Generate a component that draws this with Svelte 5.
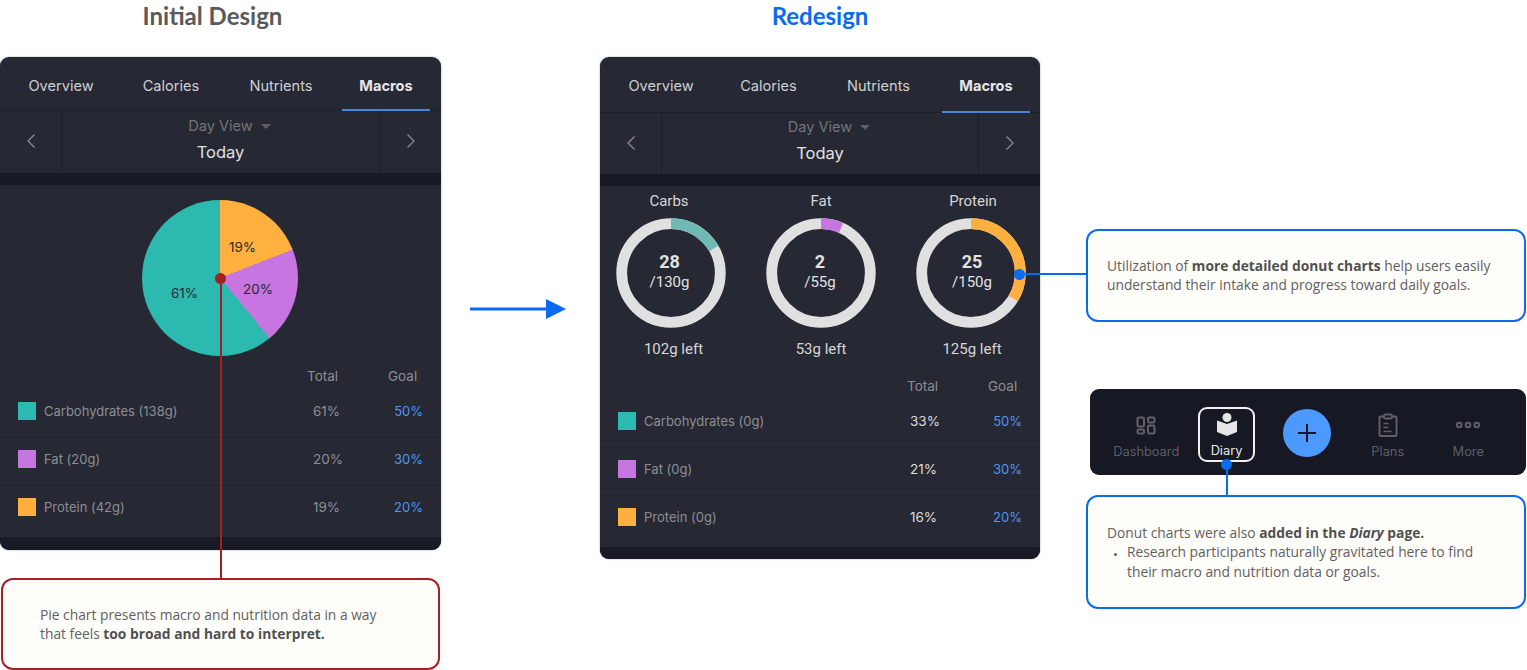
<script lang="ts">
  const tabs = ['Overview', 'Calories', 'Nutrients', 'Macros'];

  const oldRows = [
    { name: 'Carbohydrates (138g)', color: '#2cbab0', total: '61%', goal: '50%' },
    { name: 'Fat (20g)', color: '#c775e0', total: '20%', goal: '30%' },
    { name: 'Protein (42g)', color: '#ffb03f', total: '19%', goal: '20%' }
  ];
  const newRows = [
    { name: 'Carbohydrates (0g)', color: '#2cbab0', total: '33%', goal: '50%' },
    { name: 'Fat (0g)', color: '#c775e0', total: '21%', goal: '30%' },
    { name: 'Protein (0g)', color: '#ffb03f', total: '16%', goal: '20%' }
  ];

  // deg = how far the coloured arc runs round the ring
  const donuts = [
    { label: 'Carbs', value: '28', goal: '/130g', left: '102g left', color: '#6fb9b5', deg: 60 },
    { label: 'Fat', value: '2', goal: '/55g', left: '53g left', color: '#c775e0', deg: 24 },
    { label: 'Protein', value: '25', goal: '/150g', left: '125g left', color: '#ffb03f', deg: 121 }
  ];

  const R = 49.3;
  const C = 2 * Math.PI * R;
</script>

{#snippet header(variant)}
  <div class="tabs {variant}">
    {#each tabs as tab, i}
      <div class="tab" class:active={i === 3}>{tab}</div>
    {/each}
  </div>
  <div class="date {variant}">
    <div class="nav-cell">
      <svg width="10" height="16" viewBox="0 0 10 16"><path d="M8.5 1.5 2 8l6.5 6.5" fill="none" stroke="#8d8e95" stroke-width="1.2" /></svg>
    </div>
    <div class="date-mid">
      <div class="view">Day View <span class="caret"></span></div>
      <div class="today">Today</div>
    </div>
    <div class="nav-cell">
      <svg width="10" height="16" viewBox="0 0 10 16"><path d="M1.500 1.500 8 8l-6.500 6.500" fill="none" stroke="#8d8e95" stroke-width="1.2" /></svg>
    </div>
  </div>
  <div class="band"></div>
{/snippet}

{#snippet table(rows, variant)}
  <div class="table {variant}">
    <div class="thead"><span class="th-total">Total</span><span class="th-goal">Goal</span></div>
    {#each rows as row}
      <div class="row">
        <span class="swatch" style="background: {row.color}"></span>
        <span class="name">{row.name}</span>
        <span class="total">{row.total}</span>
        <span class="goal">{row.goal}</span>
      </div>
    {/each}
  </div>
  <div class="foot {variant}"></div>
{/snippet}

<div class="slide">
  <section class="col col-old">
    <h2 class="title old-title">Initial Design</h2>
    <div class="panel">
      {@render header('old')}
      <div class="pie-wrap">
        <div class="pie">
          <span class="pct p19">19%</span>
          <span class="pct p20">20%</span>
          <span class="pct p61">61%</span>
        </div>
      </div>
      {@render table(oldRows, 'old')}
    </div>
    <div class="note red">
      <p>Pie chart presents macro and nutrition data in a way<br />that feels <b>too broad and hard to interpret.</b></p>
    </div>
  </section>

  <div class="arrow">
    <svg width="96" height="24" viewBox="0 0 96 24">
      <path d="M0 12h78" stroke="#0b6bef" stroke-width="3" />
      <path d="M76 2l20 10-20 10z" fill="#0b6bef" />
    </svg>
  </div>

  <section class="col col-new">
    <h2 class="title new-title">Redesign</h2>
    <div class="panel">
      {@render header('new')}
      <div class="donuts">
        {#each donuts as d}
          <div class="donut">
            <div class="d-label">{d.label}</div>
            <div class="ring">
              <svg width="110" height="110" viewBox="0 0 110 110">
                <circle cx="55" cy="55" r={R} fill="none" stroke="#e0e0e0" stroke-width="10.8" />
                <circle cx="55" cy="55" r={R} fill="none" stroke={d.color} stroke-width="10.8"
                  stroke-dasharray="{(C * d.deg) / 360} {C}" transform="rotate(-90 55 55)" />
              </svg>
              <div class="ring-text">
                <b>{d.value}</b>
                <span>{d.goal}</span>
              </div>
            </div>
            <div class="d-left">{d.left}</div>
          </div>
        {/each}
      </div>
      {@render table(newRows, 'new')}
    </div>
  </section>

  <section class="col side">
    <div class="note blue first">
      <p>Utilization of <b>more detailed donut charts</b> help users easily<br />understand their intake and progress toward daily goals.</p>
    </div>

    <div class="tabbar">
      <div class="item">
        <svg width="22" height="24" viewBox="0 0 22 24" fill="none" stroke="#5f6068" stroke-width="2">
          <rect x="2.5" y="4.5" width="6.500" height="9" rx="1.200" />
          <rect x="13" y="4.500" width="6.500" height="5" rx="1.200" />
          <rect x="2.500" y="16.500" width="6.500" height="4" rx="1.200" />
          <rect x="13" y="12.500" width="6.500" height="8" rx="1.200" />
        </svg>
        <span>Dashboard</span>
      </div>
      <div class="item current">
        <svg width="20" height="24" viewBox="0 0 20 24">
          <circle cx="10" cy="4.500" r="4.500" fill="#e6e6e6" />
          <path d="M0 7.500 10 11l10-3.500V19l-10 4-10-4z" fill="#e6e6e6" />
        </svg>
        <span>Diary</span>
      </div>
      <div class="item">
        <div class="plus">
          <svg width="22" height="22" viewBox="0 0 22 22"><path d="M11 2v18M2 11h18" stroke="#161824" stroke-width="2" /></svg>
        </div>
      </div>
      <div class="item">
        <svg width="20" height="24" viewBox="0 0 20 24" fill="none" stroke="#5f6068" stroke-width="1.900">
          <path d="M6 3.500H2.500a1 1 0 0 0-1 1V22a1 1 0 0 0 1 1h15a1 1 0 0 0 1-1V4.500a1 1 0 0 0-1-1H14" />
          <rect x="6" y="1.500" width="8" height="4" rx="1.200" />
          <path d="M5.500 10.500h5M5.500 14.500h5M5.500 18.500h8" stroke-width="1.500" />
        </svg>
        <span>Plans</span>
      </div>
      <div class="item">
        <svg width="26" height="24" viewBox="0 0 26 24" fill="none" stroke="#5f6068" stroke-width="2">
          <circle cx="4.200" cy="12" r="2.300" />
          <circle cx="13" cy="12" r="2.300" />
          <circle cx="21.800" cy="12" r="2.300" />
        </svg>
        <span>More</span>
      </div>
    </div>

    <div class="note blue second">
      <p>Donut charts were also <b>added in the <i>Diary</i> page.</b></p>
      <ul><li>Research participants naturally gravitated here to find<br />their macro and nutrition data or goals.</li></ul>
    </div>
  </section>

  <!-- connector lines sit over everything else -->
  <i class="line v-red"></i>
  <i class="dot red-dot"></i>
  <i class="line h-blue"></i>
  <i class="dot blue-dot one"></i>
  <i class="line v-blue"></i>
  <i class="dot blue-dot two"></i>
</div>

<style>
  :global(body) {
    margin: 0;
    background: #fff;
  }

  .slide {
    position: relative;
    display: flex;
    width: 1527px;
    height: 670px;
    overflow: hidden;
    font-family: Inter, "Liberation Sans", sans-serif;
  }

  .col {
    flex: none;
    display: flex;
    flex-direction: column;
  }
  .col-old { width: 441px; }
  .col-new { width: 440px; margin-left: 34px; }
  .side { width: 440px; margin-left: 46px; padding-top: 229px; }

  .arrow {
    flex: none;
    width: 96px;
    margin-left: 29px;
    padding-top: 297px;
  }
  .arrow svg { display: block; }

  .title {
    height: 57px;
    margin: 0;
    padding-top: 2px;
    box-sizing: border-box;
    font: 700 24px/28px Lato, sans-serif;
    text-align: center;
  }
  .old-title { color: #5a5a5a; padding-right: 16px; }
  .new-title { color: #0b6bef; }

  .panel {
    background: #262833;
    border-radius: 9px;
    overflow: hidden;
    box-shadow: 0 0 2px #0006;
  }

  .tabs {
    display: grid;
    height: 54px;
    padding-left: 6px;
    grid-template-columns: 110px 110px 110px 88px;
    box-shadow: inset 0 -1px #1d1f2a;
  }
  .tabs.new { height: 56px; grid-template-columns: 110px 105px 115px 87px; }
  .tab {
    display: flex;
    align-items: center;
    justify-content: center;
    padding-top: 4px;
    font-size: 14.600px;
    color: #cfcfd2;
  }
  .tabs.new .tab { padding-top: 2px; }
  .tab.active {
    margin-left: 6px;
    width: 88px;
    font-weight: 700;
    color: #e6e6e8;
    box-shadow: inset 0 -2px #4a84d8;
  }

  .date {
    display: grid;
    grid-template-columns: 61px 1fr 61px;
    height: 62px;
  }
  .date.new { height: 61px; }
  .nav-cell {
    display: flex;
    align-items: center;
    justify-content: center;
    padding-bottom: 2px;
  }
  .date-mid {
    display: flex;
    flex-direction: column;
    align-items: center;
    padding-top: 6px;
    border-left: 1px solid #1d1f2a;
    border-right: 1px solid #1d1f2a;
  }
  .date.new .date-mid { padding-top: 5px; }
  .view {
    display: flex;
    align-items: center;
    gap: 8px;
    padding-left: 18px;
    font-size: 14.600px;
    line-height: 18px;
    color: #737479;
  }
  .caret {
    width: 0;
    height: 0;
    border: 5.500px solid transparent;
    border-top: 5px solid #5f6067;
    border-bottom: 0;
  }
  .today {
    margin-top: 7px;
    font-size: 16.500px;
    line-height: 21px;
    color: #e0e0e2;
  }

  .band {
    height: 12px;
    background: #181a26;
  }

  .pie-wrap {
    display: flex;
    justify-content: center;
    height: 181px;
    padding: 15px 1px 0 0;
    box-sizing: border-box;
  }
  .pie {
    position: relative;
    width: 156px;
    height: 156px;
    border-radius: 50%;
    background: conic-gradient(#ffb03f 0 68.6deg, #c775e0 68.6deg 140.4deg, #2cbab0 140.4deg 360deg);
  }
  .pct {
    position: absolute;
    font-size: 13.500px;
    line-height: 16px;
    color: #262833;
  }
  .p19 { left: 87px; top: 39px; }
  .p20 { left: 101px; top: 81px; }
  .p61 { left: 29px; top: 85px; }

  .table { padding-bottom: 6px; }

  .thead {
    position: relative;
    height: 21px;
    font-size: 13.500px;
    line-height: 21px;
    color: #8d8e95;
  }
  .th-total { position: absolute; left: 307px; }
  .th-goal { position: absolute; left: 388px; }

  .row {
    display: grid;
    grid-template-columns: 18px 1fr 62px 62px;
    align-items: center;
    column-gap: 8px;
    height: 48px;
    padding: 0 18px;
    box-sizing: border-box;
    border-bottom: 1px solid #2f313c;
    font-size: 13px;
    color: #8d8e95;
  }
  .row:last-child { border-bottom: 0; }
  .swatch {
    width: 18px;
    height: 18px;
  }
  .total {
    padding-left: 22px;
    font-size: 13.500px;
    white-space: nowrap;
  }
  .table.new .total {
    padding-left: 20px;
    color: #dcdcde;
  }
  .goal {
    text-align: right;
    color: #4f94f0;
  }

  .foot {
    height: 13px;
    background: #181a26;
  }
  .foot.new { height: 12px; }

  .donuts {
    display: grid;
    grid-template-columns: repeat(3, 110px);
    column-gap: 40px;
    padding: 6px 0 0 16px;
    height: 190px;
    box-sizing: border-box;
    font-family: Roboto, sans-serif;
  }
  .donut {
    display: flex;
    flex-direction: column;
    align-items: center;
  }
  .d-label {
    height: 26px;
    font-size: 15px;
    line-height: 19px;
    color: #d6d6d8;
  }
  .ring {
    position: relative;
    width: 110px;
    height: 110px;
  }
  .ring svg { display: block; }
  .ring-text {
    position: absolute;
    inset: 0;
    display: flex;
    flex-direction: column;
    align-items: center;
    justify-content: center;
    padding: 0 2px 2px 0;
    color: #e2e2e4;
  }
  .ring-text b {
    font-size: 18px;
    line-height: 20px;
  }
  .ring-text span {
    font-size: 15px;
    line-height: 20px;
  }
  .d-left {
    margin-top: 12px;
    font-size: 15px;
    line-height: 18px;
    color: #d6d6d8;
  }
  /* the labels don't sit quite on the ring axis in the design */
  .donut:nth-child(1) .d-label { padding-right: 4px; }
  .donut:nth-child(1) .d-left { padding-left: 5px; }
  .donut:nth-child(1) .ring-text { padding-right: 3px; }
  .donut:nth-child(3) .d-label { padding-left: 4px; }
  .donut:nth-child(3) .d-left { padding-left: 2px; }
  .donut:nth-child(3) .ring-text { padding: 0 0 2px 2px; }

  .note {
    box-sizing: border-box;
    background: #fffefa;
    border: 2px solid;
    border-radius: 12px;
    font: 13.800px/19.300px "Open Sans", sans-serif;
    color: #5f5f5f;
  }
  .note p { margin: 0; }
  .note b { color: #505050; }
  .note ul {
    margin: 0;
    padding: 0 0 0 20px;
  }
  .note li::marker { font-size: 9px; }
  .note.red {
    height: 92px;
    margin: 28px 1px 0 1px;
    padding: 25px 0 0 37px;
    border-color: #a51f24;
  }
  .note.blue { border-color: #0b6bef; }
  .first {
    height: 93px;
    padding: 25px 0 0 19px;
  }
  .second {
    height: 114px;
    margin-top: 20px;
    padding: 26px 0 0 19px;
  }

  .tabbar {
    display: grid;
    grid-template-columns: repeat(5, 80.500px);
    height: 86px;
    margin: 67px 0 0 4px;
    padding-left: 16px;
    background: #161824;
    border-radius: 9px;
    box-sizing: border-box;
    width: 436px;
  }
  .item {
    display: flex;
    flex-direction: column;
    align-items: center;
    padding-top: 24px;
    box-sizing: border-box;
    font-size: 12.800px;
    color: #5d5e66;
  }
  .item svg { display: block; height: 24px; }
  .item span { margin-top: 7px; line-height: 16px; }
  .item.current {
    width: 57px;
    height: 55px;
    margin: 18px 0 0 11px;
    padding: 4px 0 0 1px;
    border: 2px solid #f0f0f0;
    border-radius: 9px;
    color: #e6e6e6;
  }
  .item.current span { margin-top: 6px; }
  .plus {
    display: flex;
    align-items: center;
    justify-content: center;
    width: 48px;
    height: 48px;
    margin-top: -4px;
    border-radius: 50%;
    background: #4c9aff;
  }
  .plus svg { height: 22px; }

  .line {
    position: absolute;
    display: block;
  }
  .dot {
    position: absolute;
    display: block;
    width: 11px;
    height: 11px;
    border-radius: 50%;
  }
  .v-red {
    left: 220px;
    top: 278px;
    width: 2px;
    height: 301px;
    background: #a51f24;
  }
  .red-dot {
    left: 215px;
    top: 273px;
    background: #a51f24;
  }
  .h-blue {
    left: 1019px;
    top: 273px;
    width: 68px;
    height: 2px;
    background: #0b6bef;
  }
  .v-blue {
    left: 1226px;
    top: 465px;
    width: 2px;
    height: 31px;
    background: #0b6bef;
  }
  .blue-dot { background: #0b6bef; }
  .one { left: 1014px; top: 269px; }
  .two { left: 1221px; top: 459px; }
</style>
